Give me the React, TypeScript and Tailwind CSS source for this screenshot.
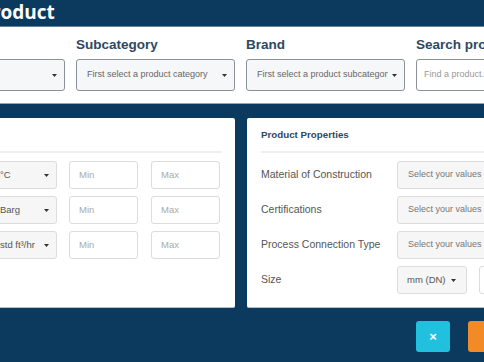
import React from "react";

const Caret = () => (
  <svg width="5" height="3" viewBox="0 0 5 3" className="shrink-0">
    <path d="M0 0h5L2.5 3z" fill="#333" />
  </svg>
);

const TopSelect = ({ text }: { text: string }) => (
  <div className="flex h-[32px] w-[159px] items-center rounded-[3px] border border-[#8b9199] bg-[#f6f7f8] pl-[10px] pr-[7px]">
    <span className="mr-[4px] flex-1 overflow-hidden whitespace-nowrap text-[9px] text-[#666]">{text}</span>
    <Caret />
  </div>
);

const Field = ({ label, children }: { label: string; children: React.ReactNode }) => (
  <div className="flex w-[159px] flex-col">
    <div className="mb-[6px] text-[13.5px] font-bold leading-[16px] text-[#2d4862]">{label}</div>
    {children}
  </div>
);

const UnitSelect = ({ text, cls }: { text: string; cls: string }) => (
  <div className={`flex h-[28px] items-center rounded-[3px] border border-[#dcdcdc] bg-[#f6f6f6] ${cls}`}>
    <span className="flex-1 whitespace-nowrap text-[9.5px] text-[#555]">{text}</span>
    <Caret />
  </div>
);

const NumInput = ({ text }: { text: string }) => (
  <div className="flex h-[28px] w-[69px] items-center rounded-[3px] border border-[#dcdcdc] bg-white pl-[9px] text-[9.5px] text-[#aaa]">
    {text}
  </div>
);

const ValuesSelect = () => (
  <div className="flex h-[28px] w-[200px] items-center rounded-[3px] border border-[#dcdcdc] bg-[#f6f6f6] pl-[10px] text-[9px] text-[#777]">
    Select your values
  </div>
);

const conditions = [
  { label: "Temperature", unit: "°C" },
  { label: "Pressure", unit: "Barg" },
  { label: "Flow Rate", unit: "std ft³/hr" },
];

const properties = ["Material of Construction", "Certifications", "Process Connection Type"];

export default function App() {
  return (
    <div className="h-[362px] w-[484px] overflow-hidden bg-[#0b3a5e] font-['Liberation_Sans',Arial,sans-serif]">
      <div className="-ml-[300px] w-[1100px]">
        {/* title bar */}
        <div className="h-[27px] border-b border-[#6f8294] pl-[280px] font-['Open_Sans',sans-serif] text-[19px] font-bold leading-[25px] text-white">
          Product
        </div>

        {/* filters */}
        <div className="flex gap-[11px] border-b border-[#9aa4ad] bg-white pb-[12px] pl-[206px] pt-[10px]">
          <Field label="Category">
            <TopSelect text="Select a category" />
          </Field>
          <Field label="Subcategory">
            <TopSelect text="First select a product category" />
          </Field>
          <Field label="Brand">
            <TopSelect text="First select a product subcategory" />
          </Field>
          <Field label="Search product">
            <div className="flex h-[32px] w-[159px] items-center rounded-[3px] border border-[#8b9199] bg-white pl-[7px] text-[9px] text-[#999]">
              Find a product...
            </div>
          </Field>
        </div>

        {/* cards */}
        <div className="mt-[14px] flex gap-[12px]">
          <div className="flex h-[190px] w-[535px] flex-col rounded-[2px] border-b border-[#b9c1c8] bg-white px-[14px] pt-[10px]">
            <div className="text-[9.75px] font-bold leading-[14px] text-[#2d4862]">Process Conditions</div>
            <div className="mb-[8px] mt-[9px] h-[2px] bg-[#eeeeee]" />
            <div className="flex flex-col gap-[7px]">
              {conditions.map((c) => (
                <div key={c.label} className="flex items-center">
                  <span className="flex-1 text-[10.5px] text-[#555]">{c.label}</span>
                  <UnitSelect text={c.unit} cls="w-[69px] pl-[11px] pr-[7px]" />
                  <div className="ml-[12px] flex gap-[13px] pr-[1px]">
                    <NumInput text="Min" />
                    <NumInput text="Max" />
                  </div>
                </div>
              ))}
            </div>
          </div>

          <div className="flex h-[190px] w-[535px] flex-col rounded-[2px] border-b border-[#b9c1c8] bg-white px-[14px] pt-[10px]">
            <div className="text-[9.75px] font-bold leading-[14px] text-[#2d4862]">Product Properties</div>
            <div className="mb-[8px] mt-[9px] h-[2px] bg-[#eeeeee]" />
            <div className="flex flex-col gap-[7px]">
              {properties.map((p) => (
                <div key={p} className="flex items-center">
                  <span className="w-[136px] text-[10.5px] text-[#555]">{p}</span>
                  <ValuesSelect />
                </div>
              ))}
              <div className="flex items-center">
                <span className="w-[136px] text-[10.5px] text-[#555]">Size</span>
                <UnitSelect text="mm (DN)" cls="w-[70px] pl-[9px] pr-[10px]" />
                <div className="ml-[12px] flex h-[28px] w-[69px] items-center rounded-[3px] border border-[#dcdcdc] bg-white" />
              </div>
            </div>
          </div>
        </div>

        {/* actions */}
        <div className="ml-[716px] mt-[13px] flex gap-[18px]">
          <button className="flex h-[31px] w-[34px] items-center justify-center rounded-[3px] bg-[#20c0de] text-[13px] font-bold text-white">
            ×
          </button>
          <button className="h-[31px] w-[60px] rounded-[3px] bg-[#f28a28] text-[11px] font-bold text-white">
            Save
          </button>
        </div>
      </div>
    </div>
  );
}
